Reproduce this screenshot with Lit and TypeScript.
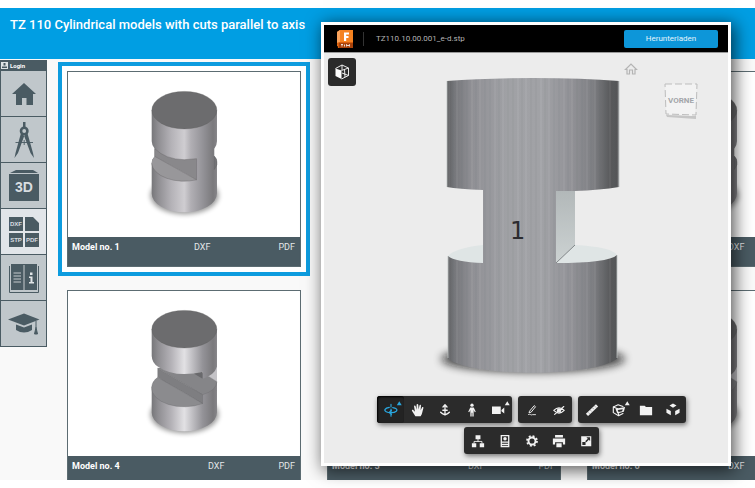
import { LitElement, html, svg, css, type TemplateResult } from "lit";
import { customElement, property } from "lit/decorators.js";

/* ---------- Small drawings of the cut cylinders ---------- */

const grayGradient = (id: string, light: string, mid: string) => svg`
  <linearGradient id=${id} gradientUnits="userSpaceOnUse" x1="289" y1="0" x2="484" y2="0">
    <stop offset="0" stop-color="#77777a"></stop>
    <stop offset="0.1" stop-color="#8f8e92"></stop>
    <stop offset="0.3" stop-color="#b4b2b7"></stop>
    <stop offset="0.5" stop-color=${light}></stop>
    <stop offset="0.6" stop-color=${mid}></stop>
    <stop offset="0.78" stop-color="#949398"></stop>
    <stop offset="0.94" stop-color="#7a797c"></stop>
    <stop offset="1" stop-color="#858488"></stop>
  </linearGradient>`;

const softShadow = svg`
  <filter id="soft" x="-20%" y="-40%" width="140%" height="180%"><feGaussianBlur stdDeviation="8"></feGaussianBlur></filter>`;

const notchModel = html`
  <svg viewBox="39 39 693 493" aria-hidden="true">
    <defs>${grayGradient("body", "#cfcdd1", "#b1afb4")}${softShadow}</defs>
    <ellipse cx="387" cy="408" rx="102" ry="56" fill="#000" opacity="0.4" filter="url(#soft)"></ellipse>
    <path fill="url(#body)" d="M289 153V246Q289 258 298 268V291Q289 300 289 312V402A97 56 0 0 0 484 402V308Q484 298 476 290V268Q484 258 484 246V153Z"></path>
    <path fill="#89888b" d="M298 268Q330 300 386 301L423 298V361L298 291Z"></path>
    <path fill="#98979a" d="M298 291Q289 300 289 312A97 56 0 0 0 423 361Z"></path>
    <path fill="none" stroke="#646366" stroke-width="1.200" d="M298 268Q330 300 386 301L423 298V361L298 291V268M289 312A97 56 0 0 0 423 361"></path>
    <path fill="#747477" stroke="#58585b" stroke-width="1" d="M476 290Q484 298 484 308V316L476 330Z"></path>
    <ellipse cx="386.500" cy="153" rx="97" ry="56" fill="#6c6c6e" stroke="#5a5a5c" stroke-width="1"></ellipse>
  </svg>`;

const steppedModel = html`
  <svg viewBox="39 21 693 493" aria-hidden="true">
    <defs>${grayGradient("body", "#e2e1e4", "#c6c5c9")}${softShadow}</defs>
    <ellipse cx="387" cy="390" rx="102" ry="56" fill="#000" opacity="0.4" filter="url(#soft)"></ellipse>
    <path fill="url(#body)" d="M289 308V384A97 56 0 0 0 484 384V292L441 320L307 282Z"></path>
    <path fill="#c4c3c7" d="M484 247V292L456 274Z"></path>
    <path fill="#858588" stroke="#6a696c" stroke-width="1" d="M307 252L441 331Q482 318 484 292Q460 276 440 266L320 250Z"></path>
    <path fill="#7e7e81" stroke="#646366" stroke-width="1" d="M307 252L441 331V357L307 279Z"></path>
    <path fill="#8b8b8e" stroke="#646366" stroke-width="1" d="M307 279L441 357A97 56 0 0 1 289 308Q291 290 307 279Z"></path>
    <path fill="url(#body)" d="M289 135V215Q290 236 308 247Q340 269 386 269Q416 269 441 262V283Q476 272 484 247V135Z"></path>
    <path fill="#69696c" d="M416 268L441 262V283Z"></path>
    <ellipse cx="386.500" cy="135" rx="97" ry="56" fill="#6c6c6e" stroke="#5a5a5c" stroke-width="1"></ellipse>
  </svg>`;

/* ---------- Navigation icons, 32 x 32 ---------- */

const navIcons: Record<string, TemplateResult> = {
  home: html`<svg viewBox="0 0 32 32" aria-hidden="true"><path d="M16 5 L28 16H25V27H18.500V20H14V27H8V16H4Z"></path></svg>`,
  compass: html`<svg viewBox="0 0 32 32" aria-hidden="true"><path d="M15 -2h2.500v5.500h-2.500z"></path><circle cx="16.200" cy="7" r="3.200" fill="none" stroke="currentColor" stroke-width="2.600"></circle><path d="M13 9L16.200 12 10 29 6.500 34 7.500 29ZM19.400 9L16.200 12 22.500 29 26 34 25 29Z"></path><path d="M7.500 18.500h17.500M16.200 16v5" stroke="currentColor" stroke-width="0.900"></path></svg>`,
  cube: html`<svg viewBox="0 0 32 32" aria-hidden="true"><path d="M2 3L8 0H25L30 3Z"></path><path d="M1 4H31V31H1Z"></path><text x="16" y="22" text-anchor="middle">3D</text></svg>`,
  files: html`<svg viewBox="0 0 32 32" aria-hidden="true" class="files"><path d="M1 1h14v14H1zM17 1h8l6 6v8H17zM1 17h14v14H1zM17 17h14v14H17z"></path><text x="8" y="10" text-anchor="middle">DXF</text><text x="8" y="26" text-anchor="middle">STP</text><text x="24" y="26" text-anchor="middle">PDF</text></svg>`,
  book: html`<svg viewBox="0 0 32 32" aria-hidden="true"><path d="M3 2H29V28H3Z"></path><path d="M1.500 4V30.500H30.500V4" fill="none" stroke="currentColor" stroke-width="1"></path><path d="M16 3V28M5.500 11h7.500M5.500 14h7.500M5.500 17h7.500M5.500 20h7.500" stroke="#c5cbce" stroke-width="1"></path><path d="M22 10.500h2.500v2.500H22zM21 14.500h3.500V20H26v1.500h-5V20h1.500v-4H21z" fill="#dfe4e6"></path></svg>`,
  cap: html`<svg viewBox="0 0 32 32" aria-hidden="true"><path d="M0 11.500L16 5.500 31.500 11.500 16 17.500Z"></path><path d="M8 16.500L16 19.500 24 16.500V22Q16 27 8 22Z"></path><path d="M28 13V20M26.500 26L28 19.500 29.500 26Z" stroke="currentColor" stroke-width="1"></path></svg>`,
};

const navItems = [
  { id: "home", label: "Home" },
  { id: "compass", label: "Drafting" },
  { id: "cube", label: "3D models" },
  { id: "files", label: "Files", active: true },
  { id: "book", label: "Handbook" },
  { id: "cap", label: "Courses" },
];

/* ---------- Viewer tool icons, 16 x 16 ---------- */

const line = (d: string, w = 1.3) =>
  svg`<path d=${d} fill="none" stroke="currentColor" stroke-width=${w} stroke-linecap="round" stroke-linejoin="round"></path>`;
const flyout = svg`<path d="M13.800 0.500L15.900 4H11.700Z"></path>`;

const tools: Record<string, { label: string; icon: unknown }> = {
  orbit: { label: "Orbit", icon: svg`${line("M8 1.500V4.500M8 7V15")}${line("M6 5C1 5.800 -.5 8.500 2.500 10C6 11.700 11.500 11.300 14 9.300C16 7.500 13.500 5.600 10 5.200", 1.5)}${line("M8.500 8.300L6 10.800L8.500 13")}` },
  pan: { label: "Pan", icon: svg`<path d="M5 15L1.200 9.200C.5 8 2 7.300 2.800 8.200L4.500 10L3.500 4C3.300 2.500 5 2.300 5.300 3.700L6.400 7.600L6.400 2C6.400.8 8.200.8 8.300 2L8.700 7.500L9.700 2.800C10 1.500 11.500 1.800 11.400 3.100L11 8.200L12.600 5.200C13.200 4.100 14.500 4.700 14.100 5.900C13 9.500 13 12.500 11 15Z"></path>` },
  zoom: { label: "Zoom", icon: line("M8 3V13M5.700 4.500L8 2L10.300 4.500M5.500 8.300H10.500M3 10.500Q4.500 12 8 13.500Q11.500 12 13 10.500", 1.5) },
  walk: { label: "First person", icon: svg`<circle cx="8" cy="2.500" r="1.900"></circle><path d="M6 5H10L12.300 10 11.200 10.500 9.900 8V15.500H8.400V11H7.600V15.500H6.100V8L4.800 10.500 3.700 10Z"></path>` },
  camera: { label: "Camera", icon: svg`<path d="M0 4H10V12.500H0ZM10.800 8L14 5V12L10.800 9.500Z"></path>` },
  markup: { label: "Markup", icon: svg`${line("M5.500 9L10.500 3L12 4.300L7 10.500L5 11Z", 1.100)}${line("M4 13C6 12 7 14.500 8.500 13.300L12 13.300", 1)}` },
  hide: { label: "Hide", icon: svg`${line("M2 8.500Q8 2.500 14 8.500Q8 14.500 2 8.500ZM3 13L13.500 4", 1.300)}<circle cx="8" cy="8.500" r="2.500"></circle>` },
  measure: { label: "Measure", icon: svg`<path d="M1 12.300L12.500 1.500L15 4L3.500 14.800Z"></path><path d="M4 11l1 1M6.500 8.500l1 1M9 6l1 1M11.500 4l1 1" stroke="#2b2b2b" stroke-width="0.700"></path>` },
  section: { label: "Section", icon: svg`${line("M1.500 4.500L7 2L12.500 4M1.500 4.500V11L7.500 14.500L12.500 12M1.500 4.500L6.500 6.500M7.500 12V14.500", 1.300)}<path fill-rule="evenodd" d="M4 6.500L15 4.500L13.500 10L6 12ZM6.500 8L7.500 10.300L11.500 9.300L12.300 7Z"></path>` },
  folder: { label: "Document browser", icon: svg`<path d="M1 3H6.500L8 4.500H15V14H1Z"></path>` },
  explode: { label: "Explode", icon: svg`<path d="M8 0.500L12 2.800L8 5.500L4 2.800ZM0.500 6.500L5.500 9V14L0.500 11ZM15.500 6.500L10.500 9V14L15.500 11Z"></path>` },
  tree: { label: "Model browser", icon: svg`<path d="M5.200 1.500h5.600v4.500h-5.600zM1 10.500h5v4.500h-5zM10 10.500h5v4.500h-5z"></path>${line("M8 6V8.500M3.500 10.500V8.500H12.500V10.500", 1)}` },
  properties: { label: "Properties", icon: svg`<path fill-rule="evenodd" d="M3 1H13V15H3ZM4.500 2.500V8.500H11.500V2.500ZM4.500 10V11H11.500V10ZM4.500 12.500V13.500H11.500V12.500Z"></path><circle cx="8" cy="5.500" r="2"></circle>` },
  settings: { label: "Settings", icon: svg`<circle cx="8" cy="8" r="4" fill="none" stroke="currentColor" stroke-width="2.200"></circle><circle cx="8" cy="8" r="5.700" fill="none" stroke="currentColor" stroke-width="2" stroke-dasharray="2.238 2.238"></circle>` },
  print: { label: "Print", icon: svg`<path fill-rule="evenodd" d="M3.500 1H12.500V4H3.500ZM1 5H15V12H12.500V9.500H3.500V12H1ZM5 10.500H11V15H5Z"></path>` },
  full: { label: "Full screen", icon: svg`<path fill-rule="evenodd" d="M2.500 2.500H14V14H2.500ZM8.500 3.800L10 5.300L7 8.300L8.400 9.500L11.200 6.600L12.700 8V3.800ZM3.800 9V12.700H7.500V9Z"></path>` },
};

const toolRows = [
  [["orbit", "pan", "zoom", "walk", "camera"], ["markup", "hide"], ["measure", "section", "folder", "explode"]],
  [["tree", "properties", "settings", "print", "full"]],
];
const withFlyout = new Set(["orbit", "camera", "section"]);

/* ---------- Side navigation ---------- */

@customElement("side-nav")
class SideNav extends LitElement {
  static styles = css`
    :host { display: block; flex: none; width: 47px; color: #4a5b63; font-family: Roboto, sans-serif; }
    nav { display: flex; flex-direction: column; gap: 1px; padding: 1px; background: #4a5b63; }
    .login { display: flex; align-items: center; gap: 2px; height: 9px; padding: 0; border: 0; background: none; color: #fff; font: 700 6px/9px Roboto, sans-serif; }
    .login svg { width: 7px; height: 7px; }
    .item { display: grid; place-items: center; height: 45px; background: #c0c7cb; color: inherit; }
    .item.active { background: #e1e5e9; }
    .item svg { width: 32px; height: 32px; fill: currentColor; overflow: visible; }
    text { fill: #d8dde0; font: 700 14px "Liberation Sans", sans-serif; }
    .files text { font-size: 6px; }
  `;
  render() {
    return html`<nav aria-label="Main">
      <button class="login"><svg viewBox="0 0 7 7" aria-hidden="true"><path fill="#dfe4e6" d="M0 0h7v7H0z"></path><path fill="#4a5b63" d="M2.500 1h2v2.500h-2zM1 4.500h5V6H1z"></path></svg>Login</button>
      ${navItems.map((n) => html`<a class="item ${n.active ? "active" : ""}" href="#${n.id}" aria-label=${n.label}>${navIcons[n.id]}</a>`)}
    </nav>`;
  }
}

/* ---------- Model card ---------- */

@customElement("model-card")
class ModelCard extends LitElement {
  @property({ type: Number }) number = 1;
  @property({ type: Boolean, reflect: true }) selected = false;
  static styles = css`
    :host { display: block; border: 1px solid #5c6c72; background: #fff; font-family: Roboto, sans-serif; }
    :host([selected]) { outline: 4px solid #0d9cdf; outline-offset: 5px; box-shadow: 0 0 0 5px #fff; }
    .picture svg { display: block; width: 100%; }
    footer { display: flex; gap: 54px; height: 29px; padding: 0 5px 0 4px; background: #4a5b63; font-size: 9px; line-height: 20px; }
    :host([selected]) footer { gap: 68px; }
    strong { flex: 1; color: #fff; font-weight: 700; white-space: nowrap; }
    a { color: #e4e8ea; text-decoration: none; }
  `;
  render() {
    return html`
      <div class="picture">${this.number > 3 ? steppedModel : notchModel}</div>
      <footer><strong>Model no. ${this.number}</strong><a href="#dxf">DXF</a><a href="#pdf">PDF</a></footer>`;
  }
}

/* ---------- 3D viewer window ---------- */

@customElement("model-viewer-window")
class ModelViewerWindow extends LitElement {
  static styles = css`
    :host { display: flex; flex-direction: column; box-sizing: border-box; border: 3px solid #fff; background: #ececec; box-shadow: 3px 3px 16px 1px rgba(0, 0, 0, 0.65); font-family: "Noto Sans", sans-serif; }
    header { display: flex; flex: none; align-items: center; height: 27px; padding: 0 10px 0 13px; background: #000; border-bottom: 1px solid #999; }
    .logo { width: 16px; height: 18px; }
    .file { margin-left: 10px; padding-left: 12px; border-left: 1px solid #333; color: #b4b4b4; font-family: Roboto, sans-serif; font-size: 8px; line-height: 14px; flex: 1; }
    .download { width: 94px; height: 18px; padding: 0; border: 0; border-radius: 2px; background: #0d96d9; color: #e4f4fc; font: 8px/18px Roboto, sans-serif; }
    .stage { position: relative; flex: 1; min-height: 0; display: flex; flex-direction: column; justify-content: space-between; }
    .scene { position: absolute; inset: 0; width: 100%; height: 100%; }
    .scene text { font: 24px "DejaVu Sans", sans-serif; fill: #2c2c2f; }
    .corner { position: relative; display: flex; align-items: flex-start; justify-content: space-between; padding: 5px 30px 0 4px; }
    .view { display: grid; place-items: center; width: 28px; height: 28px; padding: 0; border: 0; border-radius: 3px; background: #2b2b2b; color: #fff; }
    .view svg { width: 16px; height: 16px; }
    .compass { display: flex; gap: 26px; }
    .home { width: 14px; height: 14px; padding: 0; margin-top: 4px; border: 0; background: none; color: #b4b4b4; }
    .home svg { display: block; width: 14px; height: 14px; }
    .cube { width: 34px; height: 38px; margin-top: 24px; }
    .cube text { font: 700 8px Roboto, sans-serif; fill: #a3a6aa; }
    .bars { position: relative; display: flex; flex-direction: column; gap: 4px; padding: 0 0 9px 11px; }
    .row { display: flex; justify-content: center; gap: 6px; }
    .group { display: flex; border-radius: 3px; background: #2b2b2b; box-shadow: 1px 2px 5px rgba(0, 0, 0, 0.5); }
    .tool { display: grid; place-items: center; width: 27px; height: 27px; padding: 0; border: 0; background: none; color: #f2f2f2; }
    .tool > * { grid-area: 1 / 1; }
    .tool svg { width: 14px; height: 14px; fill: currentColor; overflow: visible; }
    .tool .flyout { place-self: start end; width: 7px; height: 7px; padding: 4px 1px 0 0; }
    .tool.active { color: #2aa7df; background: #232323; box-shadow: inset 1px 1px 2px #000; border-radius: 3px; }
  `;

  private scene() {
    const upper = "M447 81Q485 78 533 78Q583 78 619 81V187Q600 190 575 191H556V264H483V190Q458 189 447 187Z";
    const lower = "M448 256Q455 262 483 263H556Q608 263 617 255V359Q597 372 533 373Q468 372 448 359Z";
    return html`<svg class="scene" viewBox="324 53 404 410" role="img" aria-label="Model 1">
      <defs>
        <linearGradient id="steel" gradientUnits="userSpaceOnUse" x1="447" y1="0" x2="619" y2="0">
          <stop offset="0" stop-color="#5c5d5f"></stop>
          <stop offset="0.04" stop-color="#75767a"></stop>
          <stop offset="0.14" stop-color="#8f8f94"></stop>
          <stop offset="0.35" stop-color="#a0a1a5"></stop>
          <stop offset="0.55" stop-color="#a1a2a6"></stop>
          <stop offset="0.72" stop-color="#929297"></stop>
          <stop offset="0.85" stop-color="#7e7f83"></stop>
          <stop offset="0.95" stop-color="#58595b"></stop>
          <stop offset="0.99" stop-color="#545557"></stop>
          <stop offset="1" stop-color="#77797b"></stop>
        </linearGradient>
        <linearGradient id="wall" x1="0" y1="0" x2="0" y2="1">
          <stop offset="0" stop-color="#b1b7b8"></stop><stop offset="1" stop-color="#ccd2d2"></stop>
        </linearGradient>
        <pattern id="grain" width="23" height="400" patternUnits="userSpaceOnUse">
          <path d="M2 0V400M7 0V400M16 0V400" stroke="#55565a" stroke-width="2" opacity="0.060"></path>
          <path d="M12 0V400M20 0V400" stroke="#fff" stroke-width="2" opacity="0.050"></path>
        </pattern>
        <filter id="blur" x="-20%" y="-40%" width="140%" height="180%"><feGaussianBlur stdDeviation="4"></feGaussianBlur></filter>
      </defs>
      <ellipse cx="533" cy="359" rx="92" ry="13" fill="#111" opacity="0.75" filter="url(#blur)"></ellipse>
      <path fill="#dfe5e5" d="M448 256Q455 248 483 245H575Q612 247 617 255Q606 264 556 264H483Q452 262 448 256Z"></path>
      <path fill="url(#steel)" d=${lower}></path>
      <path fill="url(#grain)" d=${lower}></path>
      <path fill="url(#wall)" d="M556 188H575V245L556 263Z"></path>
      <path fill="none" stroke="#828789" stroke-width="1" d="M575 245L556 263"></path>
      <path fill="url(#steel)" d=${upper}></path>
      <path fill="url(#grain)" d=${upper}></path>
      <path fill="none" stroke="#bcc1c2" stroke-width="0.800" d="M447 81V187M448 256V358M617 255V358M619 81V187"></path>
      <text x="510" y="239">1</text>
    </svg>`;
  }

  render() {
    return html`
      <header>
        <svg class="logo" viewBox="0 0 16 18" aria-hidden="true">
          <path fill="#f58220" d="M3 0H16V16H0V2Z"></path><path fill="#fba35c" d="M0 2L3 0V12L0 13Z"></path><path fill="#d95f0e" d="M0 13L3 12H16V18H1Z"></path>
          <path fill="#a8430b" d="M2 13H16V18H2Z"></path><path fill="#fff" d="M7 2.500H12V4.500H9.200V6H11.500V8H9.200V11H7Z"></path>
          <path d="M4 14.500h2M5 14.500v2M7.500 14.500v2M9.500 16.500v-2l1.500 1.500 1.500-1.500v2" fill="none" stroke="#fff" stroke-width="0.800"></path>
        </svg>
        <span class="file">TZ110.10.00.001_e-d.stp</span>
        <button class="download">Herunterladen</button>
      </header>
      <div class="stage">
        ${this.scene()}
        <div class="corner">
          <button class="view" aria-label="View">
            <svg viewBox="0 0 16 16" aria-hidden="true"><path fill="#fff" d="M1.500 4.500L7.500 6.500V15L1.500 12Z"></path><path fill="none" stroke="#fff" stroke-width="0.900" d="M1.500 4.500L8 1L14.500 4V11.500L7.500 15M7.500 6.500L14.500 4M8 1V6M14.500 11.500L8 9M10.500 5.500L11 13"></path></svg>
          </button>
          <div class="compass">
            <button class="home" aria-label="Home view">
              <svg viewBox="0 0 14 14" aria-hidden="true"><path fill="none" stroke="currentColor" stroke-width="1.200" d="M1.500 7.500L7 2L12.500 7.500H11V12H8.500V8H5.500V12H3V7.500Z"></path></svg>
            </button>
            <svg class="cube" viewBox="0 0 34 38" role="img" aria-label="Vorne">
              <path fill="#c6c6c6" d="M2 33L32 34V37L3 35Z"></path>
              <path fill="#f3f3f3" d="M1 2H33L31 34L2 32Z"></path>
              <path fill="none" stroke="#bdbdbd" stroke-width="1" stroke-dasharray="7 3" d="M1 2H33L32 33L2 32Z"></path>
              <text x="17" y="21" text-anchor="middle">VORNE</text>
            </svg>
          </div>
        </div>
        <div class="bars">
          ${toolRows.map((row) => html`<div class="row">${row.map((group) => html`<div class="group" role="toolbar">
            ${group.map((id) => html`<button class="tool ${id === "orbit" ? "active" : ""}" aria-label=${tools[id].label}>
              <svg viewBox="0 0 16 16" aria-hidden="true">${tools[id].icon}</svg>
              ${withFlyout.has(id) ? html`<svg class="flyout" viewBox="11 0 6 5" aria-hidden="true">${flyout}</svg>` : ""}
            </button>`)}
          </div>`)}</div>`)}
        </div>
      </div>`;
  }
}

/* ---------- Page ---------- */

@customElement("app-root")
class AppRoot extends LitElement {
  static styles = css`
    :host { position: relative; display: flex; flex-direction: column; box-sizing: border-box; height: 100vh; padding: 8px 0; overflow: hidden; background: #fff; font-family: Roboto, sans-serif; }
    .title { flex: none; height: 51px; padding: 0 10px; background: #009ee3; }
    h1 { margin: 0; color: #fff; font-size: 13px; font-weight: 500; line-height: 34px; }
    .body { display: flex; flex: 1; min-height: 0; overflow: hidden; gap: 20px; background: #f9f9f9; padding-top: 1px; }
    .cards { display: grid; grid-template-columns: repeat(3, 234px); align-content: start; gap: 23px 26px; padding-top: 11px; }
    .window { position: absolute; inset: 22px 24px 22px 321px; }
  `;
  render() {
    return html`
      <header class="title"><h1>TZ 110 Cylindrical models with cuts parallel to axis</h1></header>
      <div class="body">
        <side-nav></side-nav>
        <main class="cards">
          ${[1, 2, 3, 4, 5, 6].map((n) => html`<model-card .number=${n} ?selected=${n === 1}></model-card>`)}
        </main>
      </div>
      <model-viewer-window class="window" role="dialog" aria-label="3D viewer"></model-viewer-window>`;
  }
}
